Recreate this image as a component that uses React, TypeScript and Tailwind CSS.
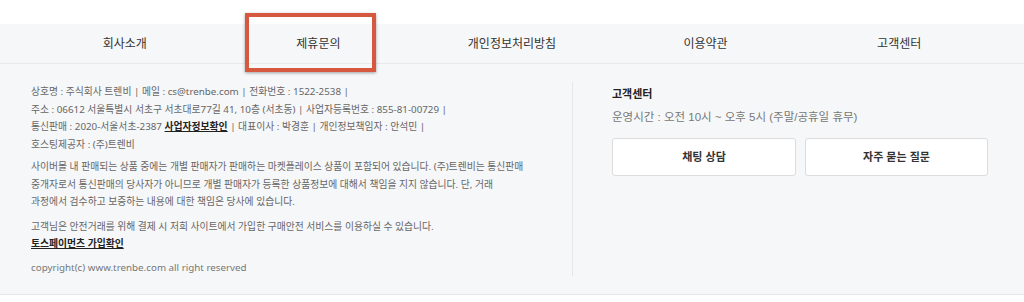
import React from "react";

const font = { fontFamily: '"Liberation Sans", "Noto Sans CJK KR", sans-serif' };
const bodyFont = { fontFamily: '"Noto Sans", "Noto Sans CJK KR", sans-serif' };

export default function App() {
  const nav = ["회사소개", "제휴문의", "개인정보처리방침", "이용약관", "고객센터"];
  return (
    <div
      className="relative w-[1024px] h-[302px] bg-white overflow-hidden font-['Liberation_Sans','Noto_Sans_CJK_KR',sans-serif]"
      style={font}
    >
      <div className="h-[24px] bg-white" />
      <div className="bg-[#f6f7f9] border-b border-[#e6e7e9]">
        <nav className="h-[40px] border-b border-[#e8e9eb] flex justify-center">
          <div className="w-[968px] grid grid-cols-5">
            {nav.map((n) => (
              <div key={n} className="flex items-center justify-center text-[12px] text-[#333]">
                {n}
              </div>
            ))}
          </div>
        </nav>
        <div className="h-[230px] flex">
          <div
            className="w-[541px] pl-[31px] pt-[19px] text-[9.8px] leading-[17.5px] text-[#666]"
            style={bodyFont}
          >
            <p>상호명 : 주식회사 트렌비 | 메일 : cs@trenbe.com | 전화번호 : 1522-2538 |</p>
            <p>주소 : 06612 서울특별시 서초구 서초대로77길 41, 10층 (서초동) | 사업자등록번호 : 855-81-00729 |</p>
            <p>
              통신판매 : 2020-서울서초-2387{" "}
              <span className="font-bold text-[#222] underline">사업자정보확인</span> | 대표이사 : 박경훈 |
              개인정보책임자 : 안석민 |
            </p>
            <p>호스팅제공자 : (주)트렌비</p>
            <p className="mt-[5px]">
              사이버몰 내 판매되는 상품 중에는 개별 판매자가 판매하는 마켓플레이스 상품이 포함되어 있습니다. (주)트렌비는 통신판매
              <br />
              중개자로서 통신판매의 당사자가 아니므로 개별 판매자가 등록한 상품정보에 대해서 책임을 지지 않습니다. 단, 거래
              <br />
              과정에서 검수하고 보증하는 내용에 대한 책임은 당사에 있습니다.
            </p>
            <p className="mt-[7px]">고객님은 안전거래를 위해 결제 시 저희 사이트에서 가입한 구매안전 서비스를 이용하실 수 있습니다.</p>
            <p className="font-bold text-[#222] underline">토스페이먼츠 가입확인</p>
            <p className="mt-[6px] text-[#777]">copyright(c) www.trenbe.com all right reserved</p>
          </div>
          <div className="w-[31px]" />
          <div className="mt-[18px] mb-[18px] w-px bg-[#e6e7e9]" />
          <div className="pl-[39px] pt-[20px] w-[416px]">
            <div className="text-[11px] font-bold text-[#222] leading-[20px]">고객센터</div>
            <div className="mt-[3px] text-[11.5px] text-[#777] leading-[20px]">
              운영시간 : 오전 10시 ~ 오후 5시 (주말/공휴일 휴무)
            </div>
            <div className="mt-[11px] flex gap-[9px]">
              <button className="w-[184px] h-[38px] bg-white border border-[#dcdcdc] rounded-[3px] text-[11px] font-bold text-[#333]">
                채팅 상담
              </button>
              <button className="w-[183px] h-[38px] bg-white border border-[#dcdcdc] rounded-[3px] text-[11px] font-bold text-[#333]">
                자주 묻는 질문
              </button>
            </div>
          </div>
        </div>
      </div>
      <div className="absolute left-[245px] top-[13px] w-[131px] h-[59px] border-[4px] border-[#d6583e] shadow-[0_1px_3px_rgba(0,0,0,0.35)]" />
    </div>
  );
}
